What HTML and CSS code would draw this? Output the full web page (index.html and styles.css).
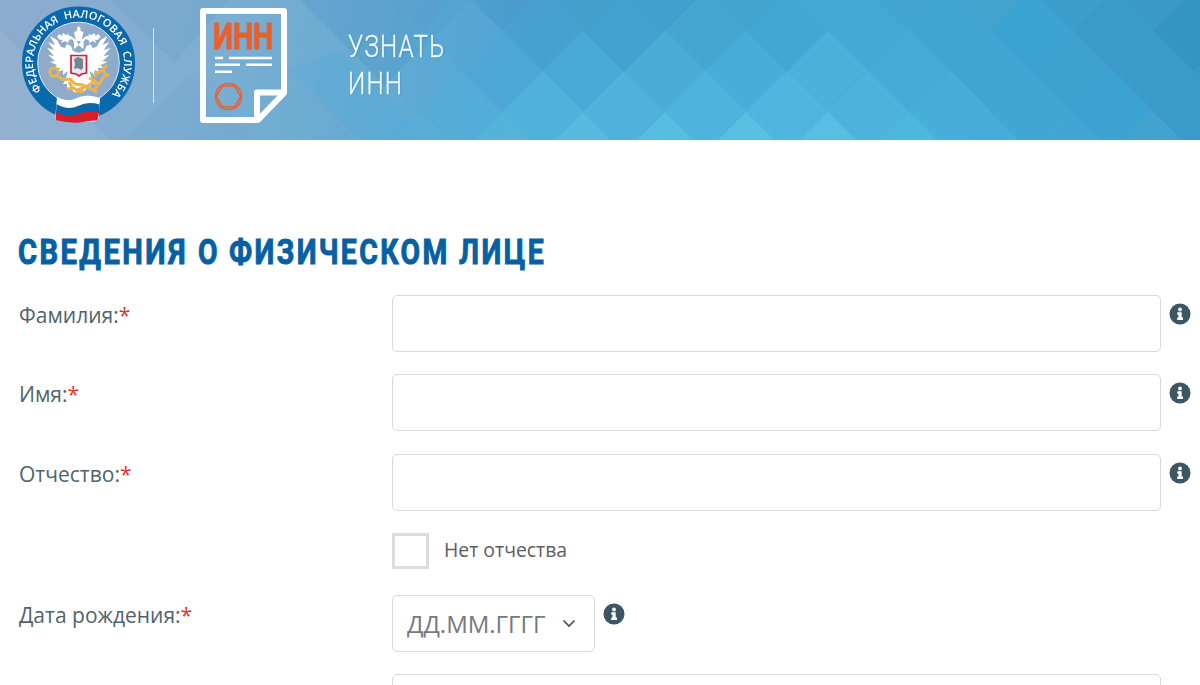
FILE: index.html
```html
<!DOCTYPE html>
<html lang="ru">
<head>
<meta charset="utf-8">
<title>Узнать ИНН</title>
<link rel="stylesheet" href="styles.css">
</head>
<body>
<header class="header">
  <svg class="pattern" viewBox="0 0 1200 140" preserveAspectRatio="none" aria-hidden="true">
    <defs>
      <linearGradient id="base" x1="0" y1="0" x2="480" y2="110" gradientUnits="userSpaceOnUse">
        <stop offset="0" stop-color="#8dabcd"/><stop offset=".42" stop-color="#7eaed2"/><stop offset=".75" stop-color="#67abd2"/><stop offset="1" stop-color="#55abd7"/>
      </linearGradient>
      <linearGradient id="fade" x1="370" x2="520" gradientUnits="userSpaceOnUse"><stop offset="0" stop-color="#000"/><stop offset="1" stop-color="#fff"/></linearGradient>
      <mask id="edge" maskUnits="userSpaceOnUse" x="0" y="0" width="1200" height="140"><rect width="1200" height="140" fill="url(#fade)"/></mask>
      <path id="d" d="M0-41 41 0 0 41-41 0Z"/>
    </defs>
    <rect width="1200" height="140" fill="url(#base)"/>
    <g opacity=".12">
      <path fill="#fff" opacity=".6" d="M0 30 110 140H0Z"/>
      <path fill="#2f7fba" opacity=".7" d="M110 0H230L175 62Z"/>
      <path fill="#1f6fb0" d="M300 0H470L385 85Z"/>
      <path fill="#2fb0e0" d="M290 70 340 50 430 140H360Z"/>
      <path fill="#4f8ec2" opacity=".6" d="M125 140 190 75 255 140Z"/>
    </g>
    <g mask="url(#edge)">
    <use href="#d" x="420" y="-9" fill="#5a9fcb"/><use href="#d" x="502" y="-9" fill="#4a9bcb"/><use href="#d" x="583" y="-9" fill="#459ecb"/><use href="#d" x="665" y="-9" fill="#429fcd"/><use href="#d" x="746" y="-9" fill="#42a4cf"/><use href="#d" x="828" y="-9" fill="#43a8d4"/><use href="#d" x="909" y="-9" fill="#42a4d0"/><use href="#d" x="990" y="-9" fill="#42a4cf"/><use href="#d" x="1072" y="-9" fill="#3c9ecc"/><use href="#d" x="1153" y="-9" fill="#3a99c8"/>
    <use href="#d" x="461" y="31" fill="#55a4d3"/><use href="#d" x="543" y="31" fill="#48a0d2"/><use href="#d" x="624" y="31" fill="#42a1cf"/><use href="#d" x="706" y="31" fill="#45a6d2"/><use href="#d" x="787" y="31" fill="#43a7d3"/><use href="#d" x="868" y="31" fill="#43a8d5"/><use href="#d" x="950" y="31" fill="#42a6d5"/><use href="#d" x="1031" y="31" fill="#3ba3d1"/><use href="#d" x="1113" y="31" fill="#3a9aca"/><use href="#d" x="1194" y="31" fill="#3494c4"/>
    <use href="#d" x="420" y="72" fill="#58a8d4"/><use href="#d" x="502" y="72" fill="#4da6d7"/><use href="#d" x="583" y="72" fill="#48a8d7"/><use href="#d" x="665" y="72" fill="#4badd6"/><use href="#d" x="746" y="72" fill="#48add9"/><use href="#d" x="828" y="72" fill="#4ab1da"/><use href="#d" x="909" y="72" fill="#45aad7"/><use href="#d" x="990" y="72" fill="#42a6d5"/><use href="#d" x="1072" y="72" fill="#3ca1cf"/><use href="#d" x="1153" y="72" fill="#3a9ac9"/><use href="#d" x="1235" y="72" fill="#3898c8"/>
    <use href="#d" x="461" y="112" fill="#52add8"/><use href="#d" x="543" y="112" fill="#50b1db"/><use href="#d" x="624" y="112" fill="#50b2dc"/><use href="#d" x="706" y="112" fill="#4eb3dd"/><use href="#d" x="787" y="112" fill="#4eb6df"/><use href="#d" x="868" y="112" fill="#4cb4dc"/><use href="#d" x="950" y="112" fill="#46aed9"/><use href="#d" x="1031" y="112" fill="#42a6d5"/><use href="#d" x="1113" y="112" fill="#3ca2d1"/><use href="#d" x="1194" y="112" fill="#3b9bc8"/>
    <use href="#d" x="420" y="153" fill="#57b2d9"/><use href="#d" x="502" y="153" fill="#55b4da"/><use href="#d" x="583" y="153" fill="#57b9df"/><use href="#d" x="665" y="153" fill="#57bde1"/><use href="#d" x="746" y="153" fill="#59c0e3"/><use href="#d" x="828" y="153" fill="#56bfe3"/><use href="#d" x="909" y="153" fill="#4eb7de"/><use href="#d" x="990" y="153" fill="#47acd8"/><use href="#d" x="1072" y="153" fill="#42a5d3"/><use href="#d" x="1153" y="153" fill="#43a2ce"/>
    </g>
  </svg>
  <div class="header-content">
    <svg class="emblem" viewBox="0 0 116 120" role="img">
      <circle cx="57.5" cy="58" r="40" fill="#8fabc9"/>
      <circle cx="57.5" cy="58" r="48.500" fill="none" stroke="#0869ad" stroke-width="16"/>
      <circle cx="57.5" cy="58" r="40.8" fill="none" stroke="#e8f1f8" stroke-width="1"/>
      <path id="ring" d="M21.600 86A45.500 45.500 0 1 1 89.700 90.200" fill="none"/>
      <text class="ring-text"><textPath href="#ring" startOffset="1" textLength="206">ФЕДЕРАЛЬНАЯ НАЛОГОВАЯ СЛУЖБА</textPath></text>
      <g id="wing" fill="#fff">
        <path d="M58 40 53 44 53 37 51 34 48 35 47 38 44 36 40 38 42 34 45 31 50 31 55 35 58 40V88L53 87 49 82 46 85 46 79 42 79 45 73 47 66 42 70 42 65 37 67 39 63 33 63 36 60 29 57 34 56 27 50 33 51 26 43 33 45 27 37 34 40 29 31 36 35 40 42 44 43 46 39 50 41 52 46 58 48Z"/>
        <path d="M36 32 38 29 41 31 42 28 45 30 48 29 47 34 39 35ZM53 27 56 26 56 23 58 21V36H55L54 32Z"/>
      </g>
      <use href="#wing" transform="matrix(-1 0 0 1 115.5 0)"/>
      <g fill="none" stroke="#e8b54d" stroke-width="3">
        <circle cx="33" cy="67" r="4.200"/><path d="m36 71 7 4 6-1 5 5 8 1 14 7M46 84l7-1 4 4 6-1M48 77l4 7M86 60l-4 4 2 5 4 2M81 66l-6 2-2 4M84 70l-6 9-5-3-6 5-11 4M68 73l6 3 2 5M72 86l5-5"/>
      </g>
      <path d="M50 50.500h15.500v17.500l-5 1-2.500 2-3-2-5-1Z" fill="#e7e9ee" stroke="#ce2536" stroke-width="1.700"/>
      <path d="m53 54 4-2 5 2v9l-2 2-3-2-4 1 1-5Z" fill="#768192"/>
      <path d="M36 92Q46 98 56 93T79 93L77.500 114Q75 118 62 116.500T34 115Z" fill="#fff"/>
      <path d="M35.500 99Q47 106 57 101T78.500 99.500L78 108Q67 106 58 110T35 108Z" fill="#0869ad"/>
      <path d="M35 107Q47 113 57 109T78 107L76.500 115.500Q71 115 62 117T34.500 115Z" fill="#dc1e2c"/>
    </svg>
    <span class="divider"></span>
    <svg class="document" viewBox="0 0 88 116" role="img">
      <path d="M3 3H84V85L58 112H3Z" fill="none" stroke="#fff" stroke-width="6" stroke-linejoin="round"/>
      <path d="M57 110V84.500H83" fill="none" stroke="#fff" stroke-width="6" stroke-linejoin="round"/>
      <text class="document-label" x="13" y="41" textLength="60" lengthAdjust="spacingAndGlyphs">ИНН</text>
      <path d="M15 50h8M29 50h43M15 56.800h25M46 56.800h26M15 63.700h17" stroke="#fff" stroke-width="2.400" fill="none"/>
      <g fill="none" stroke="#e8602f" stroke-width="1.500"><circle cx="28.500" cy="88.500" r="13"/><path d="M22.500 78H34.500L41 88.500 34.500 99H22.500L16 88.500Z"/></g>
    </svg>
    <div class="site-name"><span>УЗНАТЬ</span><span>ИНН</span></div>
  </div>
</header>
<svg class="symbols" aria-hidden="true">
  <symbol id="info" viewBox="0 0 22 22"><circle cx="11" cy="11" r="10.500" fill="#3c5664"/><circle cx="11" cy="6.500" r="1.900" fill="#fff"/><path d="M8.300 9.300h4.400v5.300h1.300V17H8.200v-2.400h1.300v-2.900H8.300Z" fill="#fff"/></symbol>
</svg>
<main class="main">
  <h1 class="title"><span class="w1">СВЕДЕНИЯ</span> <span class="w2">О</span> <span class="w3">ФИЗИЧЕСКОМ</span> <span class="w4">ЛИЦЕ</span></h1>
  <form class="form">
    <div class="row"><label class="label" for="surname">Фамилия:<b>*</b></label><input class="input" id="surname"><svg class="info"><use href="#info"/></svg></div>
    <div class="row"><label class="label" for="name">Имя:<b>*</b></label><input class="input" id="name"><svg class="info"><use href="#info"/></svg></div>
    <div class="row"><label class="label" for="patronymic">Отчество:<b>*</b></label><input class="input" id="patronymic"><svg class="info"><use href="#info"/></svg></div>
    <label class="check-row"><input class="checkbox" type="checkbox"><span>Нет отчества</span></label>
    <div class="row"><span class="label">Дата рождения:<b>*</b></span><div class="input date"><span>ДД.ММ.ГГГГ</span><svg class="chevron" viewBox="0 0 14 9"><path d="m1.500 1.500 5.500 5.500 5.500-5.500"/></svg></div><svg class="info"><use href="#info"/></svg></div>
    <div class="row"><span class="label"></span><div class="input"></div></div>
  </form>
</main>
</body>
</html>
```

FILE: styles.css
```css
* { box-sizing: border-box; }
body { display: grid; grid-template-rows: 140px 1fr; height: 685px; margin: 0; background: #fff; overflow: hidden; font-family: "Open Sans", "Noto Sans", sans-serif; color: #4f636d; }
.header { display: grid; height: 140px; overflow: hidden; }
.pattern, .header-content { grid-area: 1 / 1; }
.pattern { display: block; width: 1200px; height: 140px; }
.header-content { z-index: 1; display: flex; align-items: flex-start; }
.emblem { width: 116px; height: 120px; margin: 5px 0 0 21px; }
.ring-text { font: 600 10.8px "Open Sans", sans-serif; word-spacing: 3px; fill: #fff; }
.divider { width: 1px; height: 75px; margin: 28px 0 0 16px; background: #d8e5f0; }
.document { width: 88px; height: 116px; margin: 8px 0 0 46px; }
.document-label { font: 700 36px Roboto, sans-serif; fill: #e8602f; stroke: #e8602f; stroke-width: 1px; }
.site-name { display: flex; flex-direction: column; margin: 28px 0 0 60px; font: 300 32px/37px Roboto, sans-serif; letter-spacing: 1.5px; color: #f4fcff; text-shadow: 1px 1px 2px #37749666; -webkit-text-stroke: .3px #f4fcff; transform: scaleX(.76); transform-origin: 0 0; }
.symbols { display: none; }
.main { min-height: 0; padding: 92px 0 0 18px; overflow: hidden; }
.title { display: flex; height: 40px; margin: 0 0 23px; font: 700 35px/41px Roboto, sans-serif; letter-spacing: 3px; color: #0760a4; white-space: nowrap; }
.title span { display: block; transform-origin: 0 0; transform: scaleX(.81); -webkit-text-stroke: 1px #0760a4; }
.title .w1 { width: 180px; transform: scaleX(.83); }
.w2 { width: 31px; }
.w3 { width: 230px; }
.title .w1, .title .w2, .title .w3, .title .w4 { flex: none; }
.w4 { width: 90px; }
.form { display: flex; flex-direction: column; gap: 22.400px; }
.row { display: flex; align-items: flex-start; flex: none; height: 57.100px; }
.label { width: 374px; padding: 6px 0 0 1px; font-size: 21px; line-height: 29px; white-space: nowrap; }
.label b { font-weight: 400; color: #e03535; }
.input { width: 769px; height: 57px; padding: 0; border: 1px solid #d9d9dc; border-radius: 5px; background: #fff; outline: 0; }
.info { width: 22px; height: 22px; margin: 8px 0 0 8px; }
.check-row { display: flex; align-items: flex-start; height: 39px; margin-left: 374px; font-size: 19.400px; line-height: 33px; color: #5d5d5d; }
.checkbox { appearance: none; width: 37px; height: 36px; margin: 0 15px 0 0; border: 3px solid #dcdcdc; background: #fff; }
.date { display: flex; align-items: center; justify-content: space-between; width: 203px; padding: 0 18px 0 14px; font-size: 24px; color: #75797e; }
.chevron { width: 14px; height: 9px; fill: none; stroke: #46525a; stroke-width: 1.7; }
```
